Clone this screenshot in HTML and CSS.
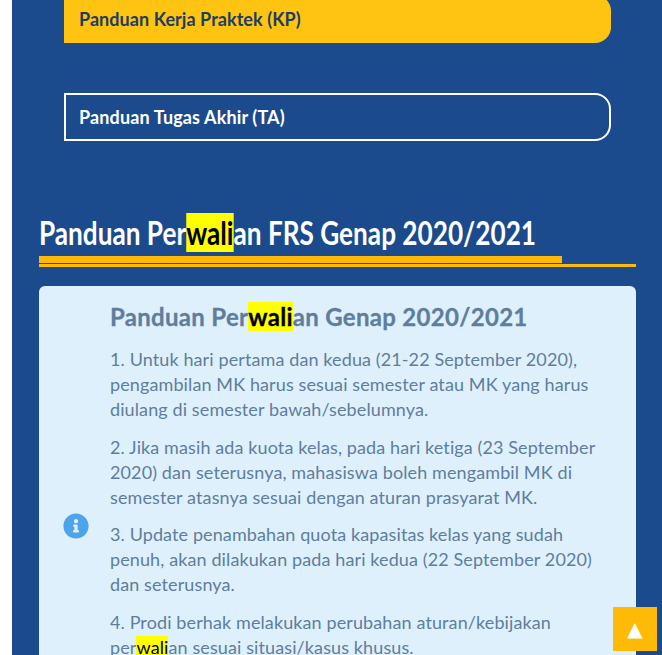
FILE: index.html
```html
<!DOCTYPE html>
<html lang="id">
<head>
<meta charset="utf-8">
<title>Panduan Perwalian</title>
<link rel="stylesheet" href="styles.css">
</head>
<body>
<main class="page">
  <div class="links">
    <a class="btn btn-solid" href="#">Panduan Kerja Praktek (KP)</a>
    <a class="btn btn-outline" href="#">Panduan Tugas Akhir (TA)</a>
  </div>
  <h2 class="title"><span class="title-text">Panduan Per<mark class="hl">wali</mark>an FRS Genap 2020/2021</span></h2>
  <div class="rule"><div class="rule-thick"></div><div class="rule-thin"></div></div>
  <section class="notice">
    <div class="notice-icon">
      <svg viewBox="0 0 512 512" width="26" height="26" aria-hidden="true"><path fill="#4ea4e8" d="M256 8C119 8 8 119 8 256s111 248 248 248 248-111 248-248S393 8 256 8zm0 110c23 0 42 19 42 42s-19 42-42 42-42-19-42-42 19-42 42-42zm56 254c0 7-5 12-12 12h-88c-7 0-12-5-12-12v-24c0-7 5-12 12-12h12v-64h-12c-7 0-12-5-12-12v-24c0-7 5-12 12-12h64c7 0 12 5 12 12v100h12c7 0 12 5 12 12v24z"/></svg>
    </div>
    <div class="notice-body">
      <h3 class="notice-title">Panduan Per<mark class="hl">wali</mark>an Genap 2020/2021</h3>
      <p>1. Untuk hari pertama dan kedua (21-22 September 2020), pengambilan MK harus sesuai semester atau MK yang harus diulang di semester bawah/sebelumnya.</p>
      <p>2. Jika masih ada kuota kelas, pada hari ketiga (23 September 2020) dan seterusnya, mahasiswa boleh mengambil MK di semester atasnya sesuai dengan aturan prasyarat MK.</p>
      <p>3. Update penambahan quota kapasitas kelas yang sudah penuh, akan dilakukan pada hari kedua (22 September 2020) dan seterusnya.</p>
      <p>4. Prodi berhak melakukan perubahan aturan/kebijakan per<mark class="hl">wali</mark>an sesuai situasi/kasus khusus.</p>
    </div>
  </section>
</main>
<a class="to-top" href="#">▲</a>
</body>
</html>
```
FILE: styles.css
```css
html, body {
  margin: 0;
  height: 655px;
  overflow: hidden;
  background: #fff;
}
.page {
  margin: -5px 0 0 12px;
  padding: 0 26px 0 27px;
  background: #1b4b8c;
  height: 900px;
  font-family: "Lato", sans-serif;
}
.links {
  display: flex;
  flex-direction: column;
  gap: 50px;
  padding: 0 25px;
}
.btn {
  display: flex;
  align-items: center;
  box-sizing: border-box;
  height: 48px;
  padding: 0 15px;
  font-size: 18px;
  font-weight: 700;
  text-decoration: none;
  border-radius: 0 16px 16px 0;
}
.btn-solid {
  background: #ffc412;
  color: #1d3c66;
  letter-spacing: 0.06px;
}
.btn-outline {
  border: 2px solid #fff;
  padding: 0 13px;
  color: #fff;
  letter-spacing: 0.13px;
}
.title {
  margin: 72px 0 0;
  font-size: 32px;
  line-height: 40px;
  font-weight: 700;
  color: #fff;
  white-space: nowrap;
}
.title-text {
  display: inline-block;
  transform: scaleX(0.818);
  transform-origin: left center;
}
.hl {
  background: #ffff00;
  color: #000;
}
.rule {
  margin-top: 3px;
}
.rule-thick {
  width: 523px;
  height: 7px;
  background: #ffba08;
}
.rule-thin {
  margin-top: 1px;
  height: 3px;
  background: #ffba08;
}
.notice {
  display: flex;
  align-items: center;
  box-sizing: border-box;
  min-height: 464px;
  margin-top: 19px;
  border-radius: 6px;
  background: #dff0fd;
  color: #5e7e9c;
  padding: 16px 32px 0 24px;
}
.notice-icon {
  display: flex;
  flex: none;
  width: 26px;
  margin-right: 22px;
}
.notice-title {
  margin: 0 0 15px 0;
  font-size: 24px;
  line-height: 30px;
  font-weight: 700;
  letter-spacing: 0.3px;
  -webkit-text-stroke: 0.3px currentColor;
}
.notice-body {
  flex: 1;
  align-self: flex-start;
  margin-left: -1px;
}
.notice-body p {
  margin: 0 0 12.6px;
  font-size: 18px;
  line-height: 25px;
  letter-spacing: 0.11px;
}
.to-top {
  position: fixed;
  right: 5px;
  bottom: 4px;
  width: 44px;
  height: 44px;
  display: flex;
  align-items: center;
  justify-content: center;
  background: #ffba08;
  color: #fff;
  font-family: "DejaVu Sans", sans-serif;
  font-size: 20px;
  text-decoration: none;
}
```
